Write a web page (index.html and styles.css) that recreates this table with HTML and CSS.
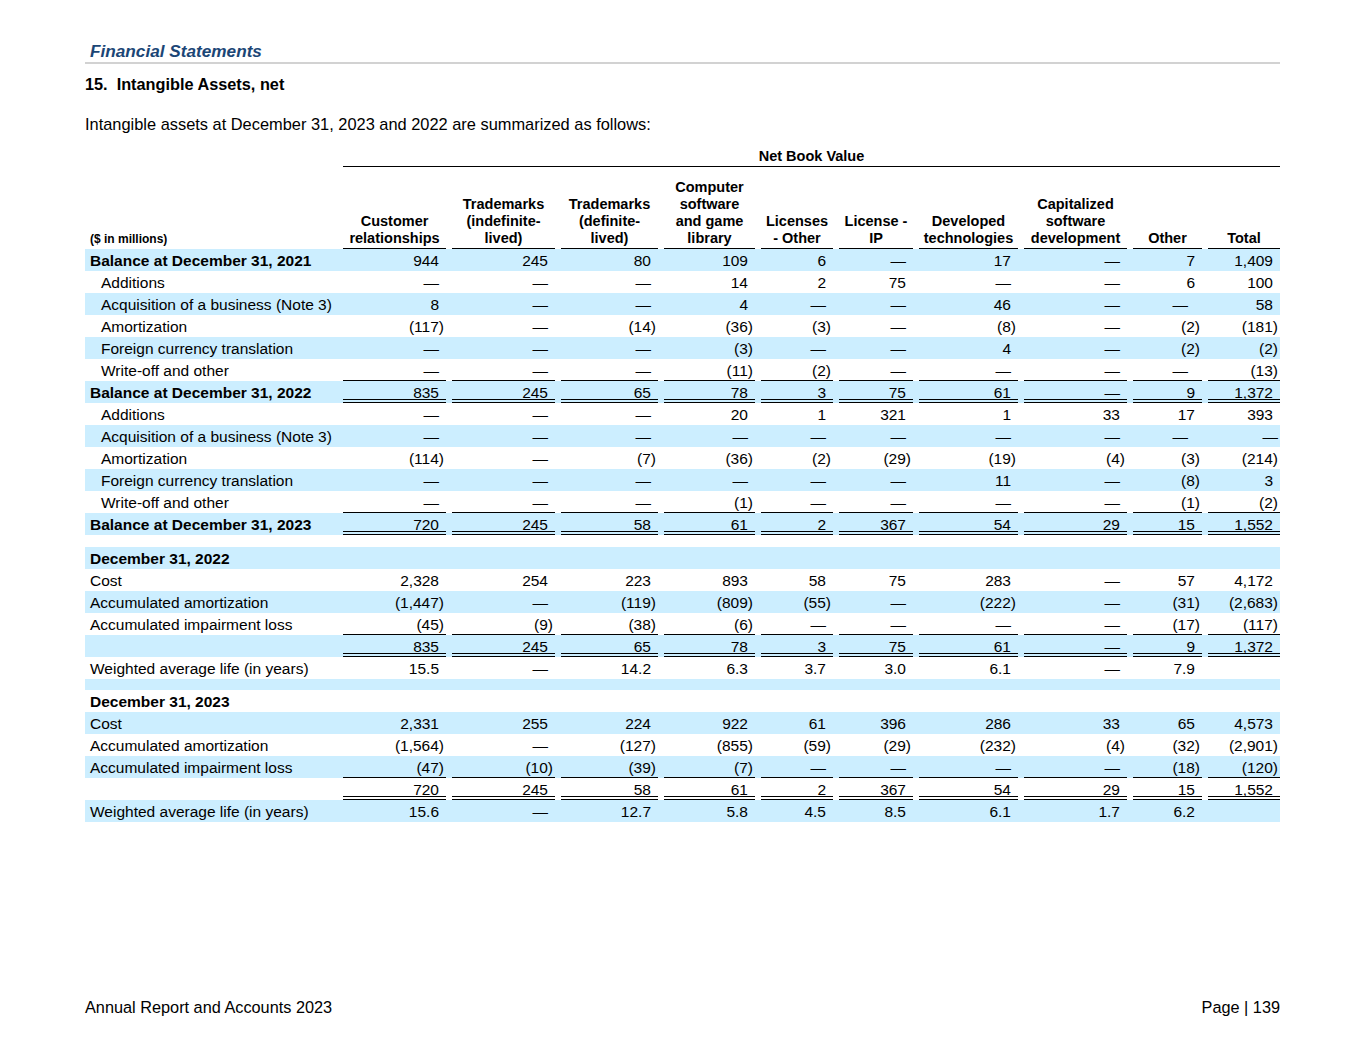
FILE: index.html
```html
<!DOCTYPE html>
<html lang="en">
<head>
<meta charset="utf-8">
<title>Intangible Assets, net</title>
<link rel="stylesheet" href="styles.css">
</head>
<body>
<div class="page">
  <div class="title">Financial Statements</div>
  <div class="rule"></div>
  <h2 class="heading"><span class="num">15.</span>Intangible Assets, net</h2>
  <p class="intro">Intangible assets at December 31, 2023 and 2022 are summarized as follows:</p>

  <div class="table">
    <div class="row nbv"><span class="nbv-t">Net Book Value</span></div>
    <div class="row hrow">
      <span class="hl">($ in millions)</span>
      <span class="h">Customer<br>relationships</span>
      <span class="h">Trademarks<br>(indefinite-<br>lived)</span>
      <span class="h">Trademarks<br>(definite-<br>lived)</span>
      <span class="h">Computer<br>software<br>and game<br>library</span>
      <span class="h">Licenses<br>- Other</span>
      <span class="h">License -<br>IP</span>
      <span class="h">Developed<br>technologies</span>
      <span class="h">Capitalized<br>software<br>development</span>
      <span class="h">Other</span>
      <span class="h">Total</span>
    </div>

    <div class="row blue"><span class="l b">Balance at December 31, 2021</span><span class="c">944</span><span class="c">245</span><span class="c">80</span><span class="c">109</span><span class="c">6</span><span class="c">—</span><span class="c">17</span><span class="c">—</span><span class="c">7</span><span class="c">1,409</span></div>
    <div class="row"><span class="l i">Additions</span><span class="c">—</span><span class="c">—</span><span class="c">—</span><span class="c">14</span><span class="c">2</span><span class="c">75</span><span class="c">—</span><span class="c">—</span><span class="c">6</span><span class="c">100</span></div>
    <div class="row blue"><span class="l i">Acquisition of a business (Note 3)</span><span class="c">8</span><span class="c">—</span><span class="c">—</span><span class="c">4</span><span class="c">—</span><span class="c">—</span><span class="c">46</span><span class="c">—</span><span class="c dash-o">—</span><span class="c">58</span></div>
    <div class="row"><span class="l i">Amortization</span><span class="c">(117<span class="p">)</span></span><span class="c">—</span><span class="c">(14<span class="p">)</span></span><span class="c">(36<span class="p">)</span></span><span class="c">(3<span class="p">)</span></span><span class="c">—</span><span class="c">(8<span class="p">)</span></span><span class="c">—</span><span class="c">(2<span class="p">)</span></span><span class="c">(181<span class="p">)</span></span></div>
    <div class="row blue"><span class="l i">Foreign currency translation</span><span class="c">—</span><span class="c">—</span><span class="c">—</span><span class="c">(3<span class="p">)</span></span><span class="c">—</span><span class="c">—</span><span class="c">4</span><span class="c">—</span><span class="c">(2<span class="p">)</span></span><span class="c">(2<span class="p">)</span></span></div>
    <div class="row u"><span class="l i">Write-off and other</span><span class="c">—</span><span class="c">—</span><span class="c">—</span><span class="c">(11<span class="p">)</span></span><span class="c">(2<span class="p">)</span></span><span class="c">—</span><span class="c">—</span><span class="c">—</span><span class="c dash-o">—</span><span class="c">(13<span class="p">)</span></span></div>
    <div class="row blue d"><span class="l b">Balance at December 31, 2022</span><span class="c">835</span><span class="c">245</span><span class="c">65</span><span class="c">78</span><span class="c">3</span><span class="c">75</span><span class="c">61</span><span class="c">—</span><span class="c">9</span><span class="c">1,372</span></div>
    <div class="row"><span class="l i">Additions</span><span class="c">—</span><span class="c">—</span><span class="c">—</span><span class="c">20</span><span class="c">1</span><span class="c">321</span><span class="c">1</span><span class="c">33</span><span class="c">17</span><span class="c">393</span></div>
    <div class="row blue"><span class="l i">Acquisition of a business (Note 3)</span><span class="c">—</span><span class="c">—</span><span class="c">—</span><span class="c">—</span><span class="c">—</span><span class="c">—</span><span class="c">—</span><span class="c">—</span><span class="c dash-o">—</span><span class="c"><span class="p">—</span></span></div>
    <div class="row"><span class="l i">Amortization</span><span class="c">(114<span class="p">)</span></span><span class="c">—</span><span class="c">(7<span class="p">)</span></span><span class="c">(36<span class="p">)</span></span><span class="c">(2<span class="p">)</span></span><span class="c">(29<span class="p">)</span></span><span class="c">(19<span class="p">)</span></span><span class="c">(4<span class="p">)</span></span><span class="c">(3<span class="p">)</span></span><span class="c">(214<span class="p">)</span></span></div>
    <div class="row blue"><span class="l i">Foreign currency translation</span><span class="c">—</span><span class="c">—</span><span class="c">—</span><span class="c">—</span><span class="c">—</span><span class="c">—</span><span class="c">11</span><span class="c">—</span><span class="c">(8<span class="p">)</span></span><span class="c">3</span></div>
    <div class="row u"><span class="l i">Write-off and other</span><span class="c">—</span><span class="c">—</span><span class="c">—</span><span class="c">(1<span class="p">)</span></span><span class="c">—</span><span class="c">—</span><span class="c">—</span><span class="c">—</span><span class="c">(1<span class="p">)</span></span><span class="c">(2<span class="p">)</span></span></div>
    <div class="row blue d"><span class="l b">Balance at December 31, 2023</span><span class="c">720</span><span class="c">245</span><span class="c">58</span><span class="c">61</span><span class="c">2</span><span class="c">367</span><span class="c">54</span><span class="c">29</span><span class="c">15</span><span class="c">1,552</span></div>

    <div class="spacer s12"></div>

    <div class="row blue"><span class="l b">December 31, 2022</span></div>
    <div class="row"><span class="l">Cost</span><span class="c">2,328</span><span class="c">254</span><span class="c">223</span><span class="c">893</span><span class="c">58</span><span class="c">75</span><span class="c">283</span><span class="c">—</span><span class="c">57</span><span class="c">4,172</span></div>
    <div class="row blue"><span class="l">Accumulated amortization</span><span class="c">(1,447<span class="p">)</span></span><span class="c">—</span><span class="c">(119<span class="p">)</span></span><span class="c">(809<span class="p">)</span></span><span class="c">(55<span class="p">)</span></span><span class="c">—</span><span class="c">(222<span class="p">)</span></span><span class="c">—</span><span class="c">(31<span class="p">)</span></span><span class="c">(2,683<span class="p">)</span></span></div>
    <div class="row u"><span class="l">Accumulated impairment loss</span><span class="c">(45<span class="p">)</span></span><span class="c">(9<span class="p">)</span></span><span class="c">(38<span class="p">)</span></span><span class="c">(6<span class="p">)</span></span><span class="c">—</span><span class="c">—</span><span class="c">—</span><span class="c">—</span><span class="c">(17<span class="p">)</span></span><span class="c">(117<span class="p">)</span></span></div>
    <div class="row blue d"><span class="l"></span><span class="c">835</span><span class="c">245</span><span class="c">65</span><span class="c">78</span><span class="c">3</span><span class="c">75</span><span class="c">61</span><span class="c">—</span><span class="c">9</span><span class="c">1,372</span></div>
    <div class="row"><span class="l">Weighted average life (in years)</span><span class="c">15.5</span><span class="c">—</span><span class="c">14.2</span><span class="c">6.3</span><span class="c">3.7</span><span class="c">3.0</span><span class="c">6.1</span><span class="c">—</span><span class="c">7.9</span><span class="c"></span></div>

    <div class="spacer s11 blue"></div>

    <div class="row"><span class="l b">December 31, 2023</span></div>
    <div class="row blue"><span class="l">Cost</span><span class="c">2,331</span><span class="c">255</span><span class="c">224</span><span class="c">922</span><span class="c">61</span><span class="c">396</span><span class="c">286</span><span class="c">33</span><span class="c">65</span><span class="c">4,573</span></div>
    <div class="row"><span class="l">Accumulated amortization</span><span class="c">(1,564<span class="p">)</span></span><span class="c">—</span><span class="c">(127<span class="p">)</span></span><span class="c">(855<span class="p">)</span></span><span class="c">(59<span class="p">)</span></span><span class="c">(29<span class="p">)</span></span><span class="c">(232<span class="p">)</span></span><span class="c">(4<span class="p">)</span></span><span class="c">(32<span class="p">)</span></span><span class="c">(2,901<span class="p">)</span></span></div>
    <div class="row blue u"><span class="l">Accumulated impairment loss</span><span class="c">(47<span class="p">)</span></span><span class="c">(10<span class="p">)</span></span><span class="c">(39<span class="p">)</span></span><span class="c">(7<span class="p">)</span></span><span class="c">—</span><span class="c">—</span><span class="c">—</span><span class="c">—</span><span class="c">(18<span class="p">)</span></span><span class="c">(120<span class="p">)</span></span></div>
    <div class="row d"><span class="l"></span><span class="c">720</span><span class="c">245</span><span class="c">58</span><span class="c">61</span><span class="c">2</span><span class="c">367</span><span class="c">54</span><span class="c">29</span><span class="c">15</span><span class="c">1,552</span></div>
    <div class="row blue"><span class="l">Weighted average life (in years)</span><span class="c">15.6</span><span class="c">—</span><span class="c">12.7</span><span class="c">5.8</span><span class="c">4.5</span><span class="c">8.5</span><span class="c">6.1</span><span class="c">1.7</span><span class="c">6.2</span><span class="c"></span></div>
  </div>

  <footer class="footer">
    <span>Annual Report and Accounts 2023</span>
    <span>Page | 139</span>
  </footer>
</div>
</body>
</html>
```

FILE: styles.css
```css
* { box-sizing: border-box; }

body {
  margin: 0;
  background: #ffffff;
  color: #000000;
  font-family: "Liberation Sans", Arial, sans-serif;
}

.page {
  width: 1365px;
  padding: 41px 85px 0 85px;
}

.title {
  font-size: 17.2px;
  font-weight: bold;
  font-style: italic;
  color: #1b4676;
  line-height: 20px;
  padding-left: 5px;
}

.rule {
  height: 2px;
  margin-top: 1px;
  background: #d2d2d2;
}

.heading {
  margin: 10px 0 0 0;
  font-size: 16.3px;
  font-weight: bold;
  line-height: 20px;
}

.heading .num {
  margin-right: 9px;
}

.intro {
  margin: 20px 0 0 0;
  font-size: 16.4px;
  line-height: 20px;
}

.table {
  margin-top: 13px;
}

.row {
  display: grid;
  grid-template-columns: 252px 103px 103px 97px 91px 72px 74px 99px 103px 69px 72px;
  column-gap: 6px;
  height: 22px;
  line-height: 22px;
  font-size: 15.5px;
}

.blue {
  background: #cceeff;
}

.l {
  padding-left: 5px;
  padding-top: 1px;
  line-height: 21px;
  white-space: nowrap;
}

.l.i {
  padding-left: 16px;
}

.l.b {
  font-weight: bold;
}

.c {
  text-align: right;
  padding-right: 7px;
  padding-top: 1px;
  line-height: 21px;
  white-space: nowrap;
}

.p {
  margin-right: -5px;
}

.dash-o {
  padding-right: 14px;
}

.u .c {
  background: linear-gradient(#000, #000) left bottom / 100% 1px no-repeat;
}

.d .c {
  background:
    linear-gradient(#000, #000) left bottom / 100% 1px no-repeat,
    linear-gradient(#000, #000) left calc(100% - 3px) / 100% 1px no-repeat;
}

.nbv {
  height: 20px;
  line-height: 19px;
}

.nbv-t {
  grid-column: 2 / -1;
  text-align: center;
  font-size: 14.5px;
  font-weight: bold;
  border-bottom: 1px solid #000;
}

.hrow {
  height: 82px;
  align-items: end;
}

.h {
  text-align: center;
  font-size: 14.5px;
  font-weight: bold;
  line-height: 17px;
  border-bottom: 1px solid #000;
  padding-bottom: 1px;
  white-space: nowrap;
}

.hl {
  font-size: 12px;
  font-weight: bold;
  line-height: 17px;
  padding-left: 5px;
  padding-bottom: 1px;
}

.spacer.s12 { height: 12px; }
.spacer.s11 { height: 11px; }

.footer {
  margin-top: 175px;
  display: flex;
  justify-content: space-between;
  font-size: 16.3px;
  line-height: 20px;
}
```
